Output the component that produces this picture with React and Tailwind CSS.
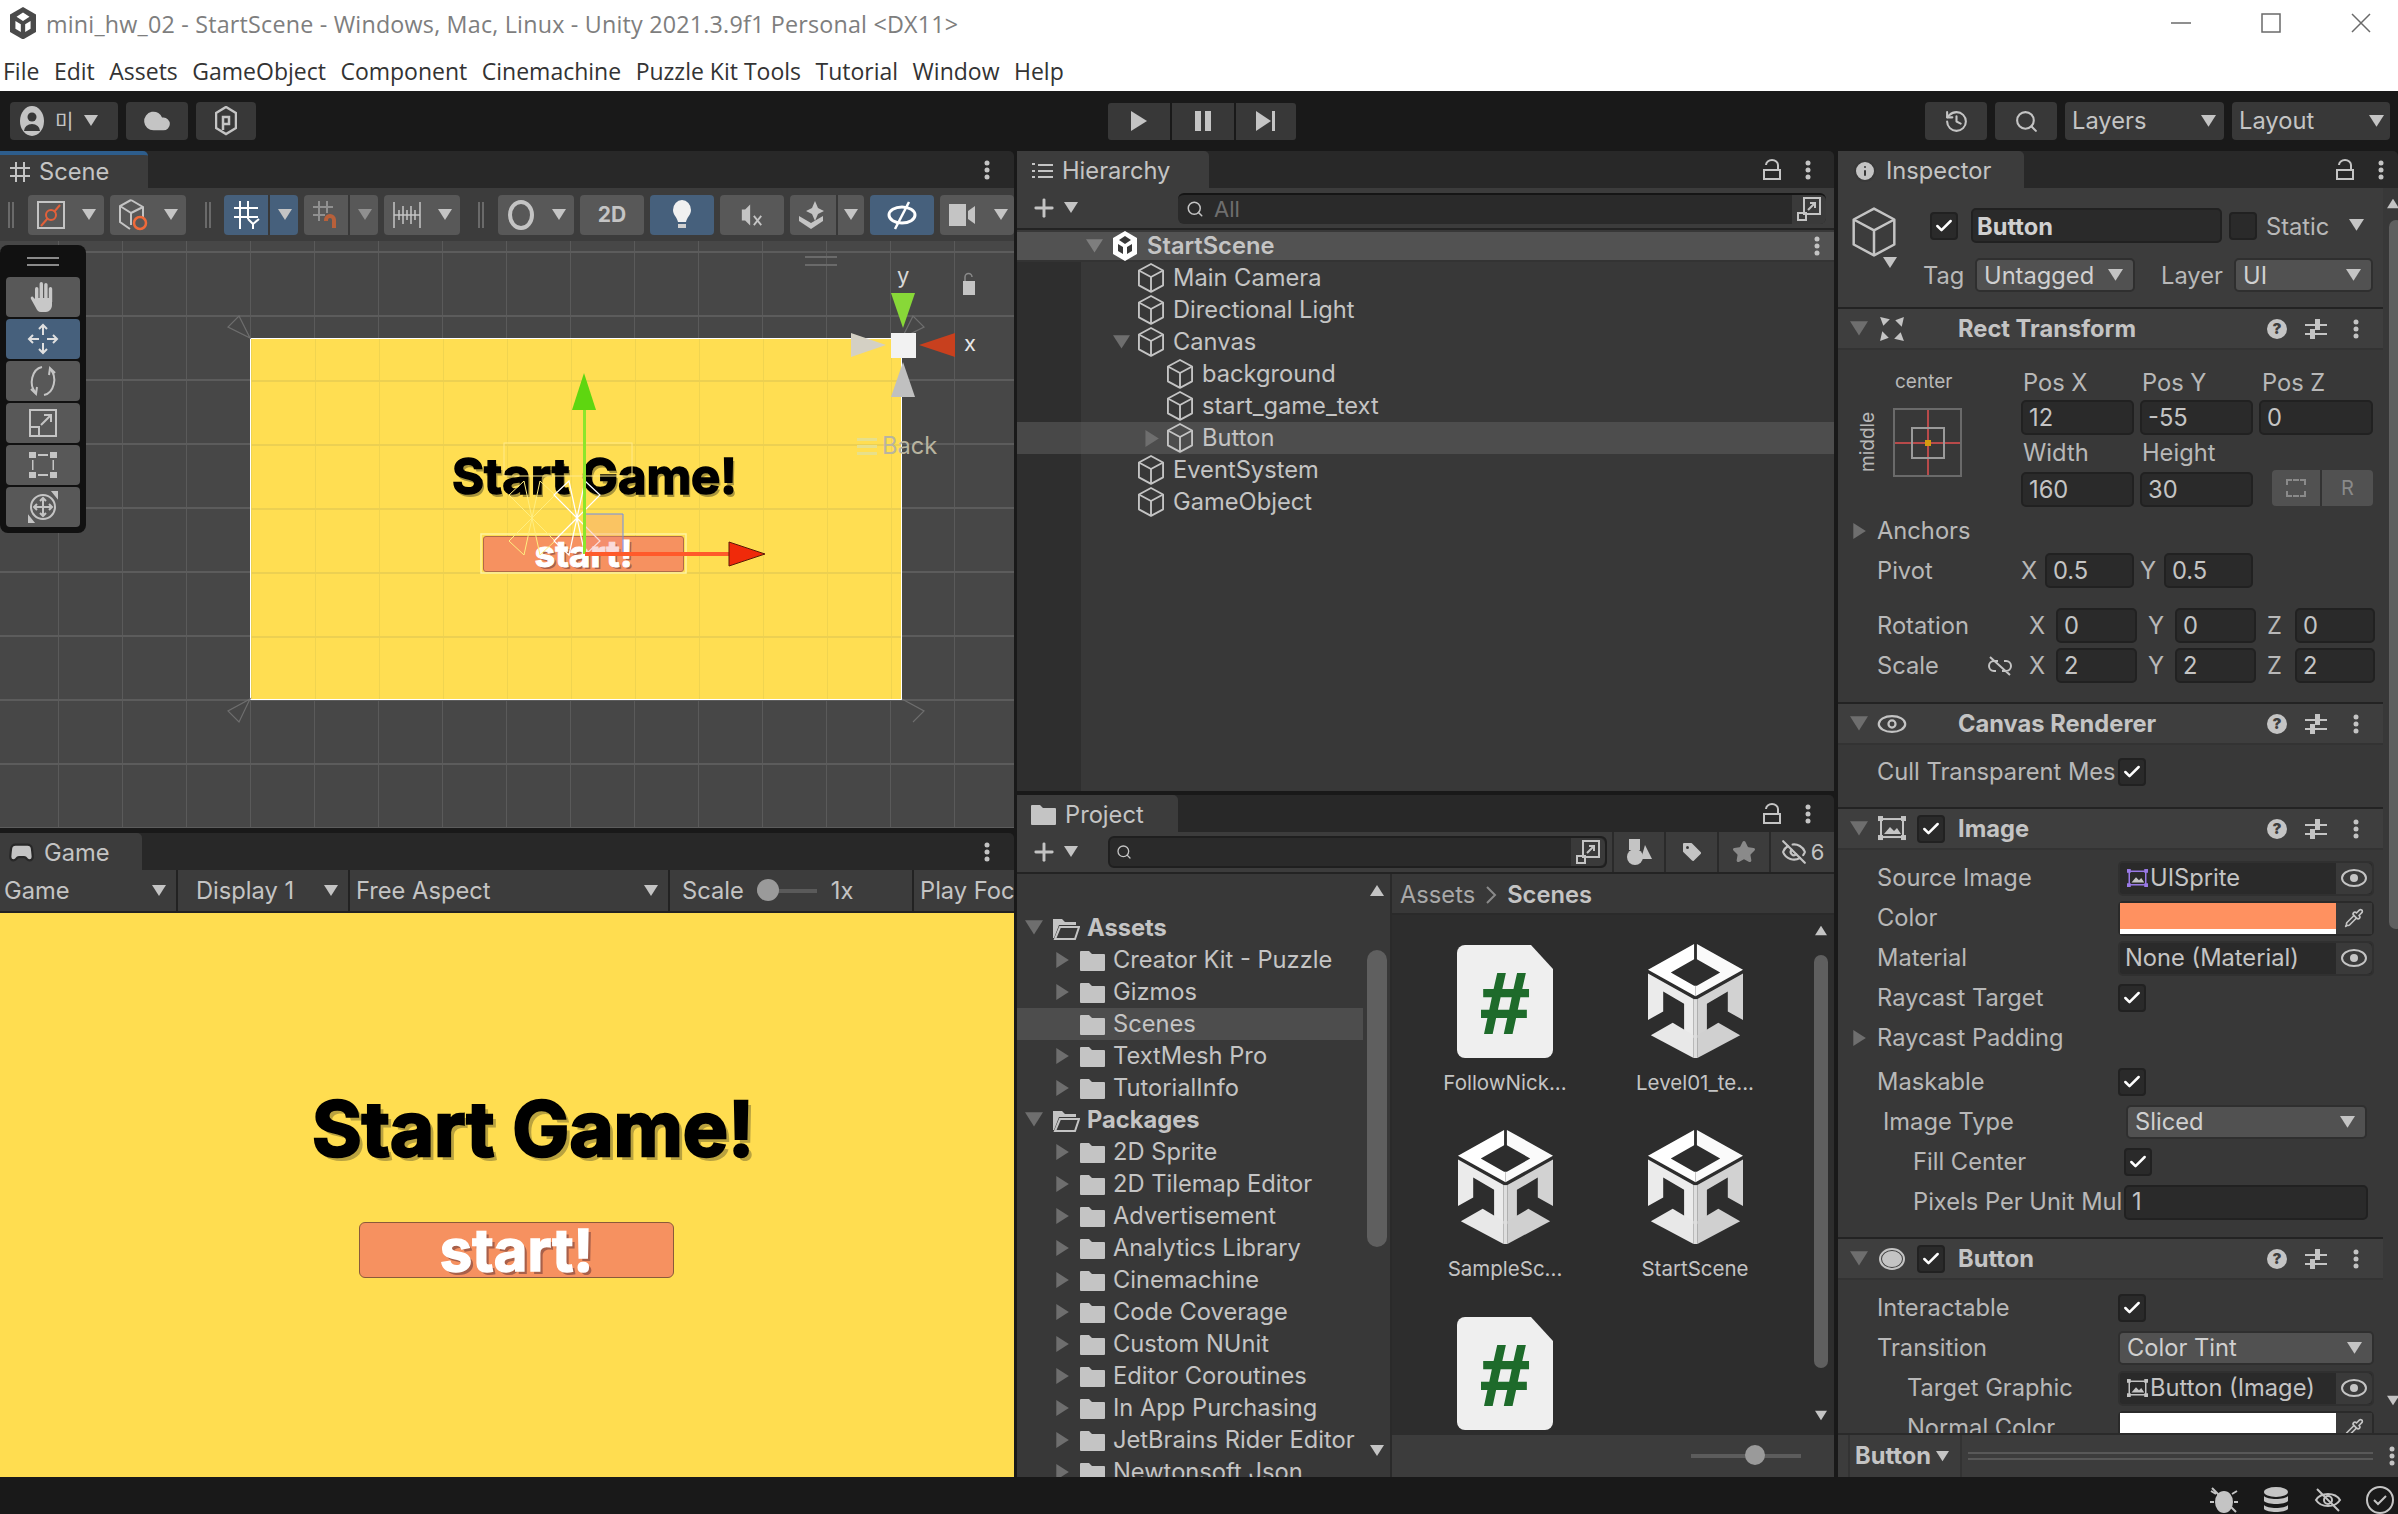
import {
  Check, Search, History, Star, Tag, EyeOff, Info, Gamepad2, Cloud, Plus, Pipette,
} from 'lucide-react';

const txt = 'text-[#c4c4c4]';

function Tri({ dir = 'down', size = 14, color = '#c4c4c4' }) {
  const pts = { down: '0,1 14,1 7,12', right: '2,0 13,7 2,14', up: '0,12 14,12 7,1' }[dir];
  return (
    <svg width={size} height={size} viewBox="0 0 14 14" className="shrink-0">
      <polygon points={pts} fill={color} />
    </svg>
  );
}

function Kebab({ color = '#c4c4c4' }) {
  return (
    <svg width="6" height="20" viewBox="0 0 6 20" className="shrink-0">
      <circle cx="3" cy="3" r="2.5" fill={color} />
      <circle cx="3" cy="10" r="2.5" fill={color} />
      <circle cx="3" cy="17" r="2.5" fill={color} />
    </svg>
  );
}

function LockOpen() {
  return (
    <svg width="18" height="22" viewBox="0 0 18 22" className="shrink-0" fill="none" stroke="#c4c4c4" strokeWidth="2">
      <rect x="1" y="11" width="16" height="9" />
      <path d="M3 6a6 5 0 0 1 12 0v5" />
    </svg>
  );
}

function GoCube({ size = 28, color = '#c4c4c4' }) {
  return (
    <svg width={size} height={size * 1.15} viewBox="0 0 28 32" className="shrink-0" fill="none" stroke={color} strokeWidth="2" strokeLinejoin="round">
      <polygon points="14,1 27,8 27,24 14,31 1,24 1,8" />
      <path d="M1 8l13 7 13-7M14 15v16" />
    </svg>
  );
}

function UnityMini({ width = 24, color = '#fff', bg = 'none' }) {
  return (
    <svg width={width} height={width * 1.25} viewBox="0 0 24 30" className="shrink-0">
      <polygon points="12,0 24,7 24,23 12,30 0,23 0,7" fill={bg === 'none' ? color : bg} />
      <path d="M12 5l6 4-6 4-6-4zM5 13l5 3v7l-5-3zM19 13l-5 3v7l5-3z" fill={bg === 'none' ? '#383838' : color} />
    </svg>
  );
}

function UnityBig() {
  return (
    <svg width="97" height="114" viewBox="0 0 100 120">
      <polygon points="48.5,0 48.5,16 24,30 48.5,44 50,44 50,55 0,27" fill="#ffffff" />
      <polygon points="51.5,0 51.5,16 76,30 51.5,44 50,44 50,55 100,27" fill="#fafafa" />
      <polygon points="0,31 48,58 48,99 38,93 38,63 16,50 16,71 0,80" fill="#ebebeb" />
      <polygon points="100,31 52,58 52,99 62,93 62,63 84,50 84,71 100,80" fill="#d2d2d2" />
      <polygon points="3,96 26,83 48,96 48,120" fill="#e8e8e8" />
      <polygon points="97,96 74,83 52,96 52,120" fill="#d0d0d0" />
      <rect x="48" y="58" width="4" height="62" fill="#dedede" />
    </svg>
  );
}

function ScriptIcon() {
  return (
    <svg width="96" height="113" viewBox="0 0 96 113">
      <path d="M8 0H74L96 24V105a8 8 0 0 1-8 8H8a8 8 0 0 1-8-8V8a8 8 0 0 1 8-8z" fill="#efefef" />
      <text x="48" y="88" textAnchor="middle" fontFamily="Liberation Sans" fontWeight="700" fontSize="88" fill="#1e6b2b" stroke="#1e6b2b" strokeWidth="2">#</text>
    </svg>
  );
}

function Folder({ open }) {
  if (open) {
    return (
      <svg width="28" height="24" viewBox="0 0 28 24" className="shrink-0">
        <path d="M1 3h9l3 3h11v3H7L2 22H1z" fill="#c4c4c4" />
        <path d="M8 11h19l-4 12H3z" fill="none" stroke="#c4c4c4" strokeWidth="2" />
      </svg>
    );
  }
  return (
    <svg width="25" height="21" viewBox="0 0 25 21" className="shrink-0">
      <path d="M0 2a1 1 0 0 1 1-1h8l3 3h12a1 1 0 0 1 1 1v15a1 1 0 0 1-1 1H1a1 1 0 0 1-1-1z" fill="#c4c4c4" />
    </svg>
  );
}

function EyeDot() {
  return (
    <svg width="26" height="20" viewBox="0 0 26 20" fill="none" stroke="#c4c4c4" strokeWidth="2">
      <ellipse cx="13" cy="10" rx="12" ry="8" />
      <circle cx="13" cy="10" r="4" fill="#c4c4c4" stroke="none" />
    </svg>
  );
}

function Grip() {
  return <div className="w-[6px] h-[26px] border-x-2 border-[#6a6a6a] shrink-0" />;
}

function Tab({ width, icon, label, accent, pad = 'pl-[14px]' }) {
  return (
    <div style={{ width }} className={`h-full bg-[#3c3c3c] rounded-tr-[5px] flex items-center gap-[9px] shrink-0 ${pad} ${accent ? 'border-t-4 border-[#2d5d8c]' : 'pt-[2px]'}`}>
      {icon}
      <span className={`text-[23.7px] ${txt}`}>{label}</span>
    </div>
  );
}

function SceneBtn({ width, blue, children, split }) {
  const bg = blue ? 'bg-[#46607c]' : 'bg-[#585858]';
  return (
    <div style={{ width }} className={`h-[40px] ${bg} rounded-[4px] flex items-center justify-center shrink-0 relative`}>
      {children}
      {split && <div style={{ left: split }} className="absolute top-0 bottom-0 w-[2px] bg-[#383838]" />}
    </div>
  );
}

function Toolbar() {
  return (
    <div className="h-[60px] bg-[#191919] flex items-center relative shrink-0">
      <div className="flex items-center gap-[8px] ml-[10px]">
        <div className="w-[108px] h-[38px] bg-[#383838] rounded-[4px] flex items-center pl-[10px] gap-[11px]">
          <svg width="24" height="30" viewBox="0 0 24 30">
            <ellipse cx="12" cy="15" rx="12" ry="15" fill="#c4c4c4" />
            <circle cx="12" cy="11" r="4.5" fill="#383838" />
            <path d="M4 25a8 7 0 0 1 16 0z" fill="#383838" />
          </svg>
          <span className="text-[20px] text-[#c4c4c4] font-['Noto_Sans_CJK_KR',sans-serif]">미</span>
          <Tri size={14} />
        </div>
        <div className="w-[62px] h-[38px] bg-[#383838] rounded-[4px] flex items-center justify-center">
          <Cloud size={28} fill="#c4c4c4" color="#c4c4c4" />
        </div>
        <div className="w-[60px] h-[38px] bg-[#383838] rounded-[4px] flex items-center justify-center">
          <svg width="22" height="30" viewBox="0 0 22 30" fill="none" stroke="#c4c4c4" strokeWidth="2.5">
            <polygon points="11,1 21,7 21,22 11,28 1,22 1,7" />
            <path d="M8 24V11h6v7H8" />
          </svg>
        </div>
      </div>
      <div className="flex items-center gap-[2px] ml-[852px]">
        <div className="w-[62px] h-[37px] bg-[#383838] rounded-l-[3px] flex items-center justify-center">
          <svg width="18" height="20" viewBox="0 0 18 20"><polygon points="1,0 17,10 1,20" fill="#c4c4c4" /></svg>
        </div>
        <div className="w-[62px] h-[37px] bg-[#383838] flex items-center justify-center gap-[4px]">
          <div className="w-[6px] h-[20px] bg-[#c4c4c4]" />
          <div className="w-[6px] h-[20px] bg-[#c4c4c4]" />
        </div>
        <div className="w-[60px] h-[37px] bg-[#383838] rounded-r-[3px] flex items-center justify-center">
          <svg width="22" height="20" viewBox="0 0 22 20"><polygon points="1,0 16,10 1,20" fill="#c4c4c4" /><rect x="17" width="3" height="20" fill="#c4c4c4" /></svg>
        </div>
      </div>
      <div className="flex items-center gap-[8px] ml-auto mr-[8px]">
        <div className="w-[62px] h-[38px] bg-[#383838] rounded-[4px] flex items-center justify-center">
          <History size={25} color="#c4c4c4" />
        </div>
        <div className="w-[62px] h-[38px] bg-[#383838] rounded-[4px] flex items-center justify-center">
          <Search size={25} color="#c4c4c4" />
        </div>
        <div className={`w-[159px] h-[38px] bg-[#383838] rounded-[4px] flex items-center justify-between pl-[7px] pr-[8px] text-[23.7px] ${txt}`}>
          Layers <Tri size={15} />
        </div>
        <div className={`w-[158px] h-[38px] bg-[#383838] rounded-[4px] flex items-center justify-between pl-[7px] pr-[6px] text-[23.7px] ${txt}`}>
          Layout <Tri size={15} />
        </div>
      </div>
    </div>
  );
}

function ToolBtn({ blue, children }) {
  return (
    <div className={`h-[40px] w-[74px] rounded-[4px] flex items-center justify-center ${blue ? 'bg-[#46607c]' : 'bg-[#585858]'}`}>
      {children}
    </div>
  );
}

function Toolbox() {
  return (
    <div className="absolute left-0 top-[4px] w-[86px] h-[288px] bg-[#111111] rounded-[8px] px-[6px] flex flex-col">
      <div className="h-[32px] flex flex-col items-center justify-center gap-[5px]">
        <div className="w-[32px] h-[2px] bg-[#8a8a8a]" />
        <div className="w-[32px] h-[2px] bg-[#8a8a8a]" />
      </div>
      <div className="flex flex-col gap-[2px]">
        <ToolBtn>
          <svg width="28" height="32" viewBox="0 0 28 32" fill="#c8c8c8">
            <rect x="6" y="6" width="3.4" height="16" rx="1.7" />
            <rect x="10.6" y="1" width="3.4" height="20" rx="1.7" />
            <rect x="15.2" y="2" width="3.4" height="19" rx="1.7" />
            <rect x="19.8" y="6" width="3.4" height="16" rx="1.7" />
            <path d="M6 17h17v7c0 4-3 7-6 7h-5c-3 0-4-2-5-4l-5-9c-1-2 1-3 2-2l2 2z" />
          </svg>
        </ToolBtn>
        <ToolBtn blue>
          <svg width="32" height="32" viewBox="0 0 32 32" fill="none" stroke="#e0e0e0" strokeWidth="2">
            <path d="M16 2v10M16 20v10M2 16h10M20 16h10M12 6l4-4 4 4M12 26l4 4 4-4M6 12l-4 4 4 4M26 12l4 4-4 4" />
          </svg>
        </ToolBtn>
        <ToolBtn>
          <svg width="30" height="32" viewBox="0 0 30 32" fill="none" stroke="#c4c4c4" strokeWidth="2">
            <path d="M14 2C4 4 0 20 8 28M16 30c10-2 14-18 6-26" />
            <path d="M3 24l5 5 1-7M27 8l-5-5-1 7" />
          </svg>
        </ToolBtn>
        <ToolBtn>
          <svg width="28" height="28" viewBox="0 0 28 28" fill="none" stroke="#c4c4c4" strokeWidth="2">
            <rect x="1" y="1" width="26" height="26" />
            <path d="M1 18h9v9M12 16l10-10M15 6h7v7" />
          </svg>
        </ToolBtn>
        <ToolBtn>
          <svg width="30" height="28" viewBox="0 0 30 28" fill="#c4c4c4">
            <rect x="1" y="1" width="7" height="6" /><rect x="22" y="1" width="7" height="6" />
            <rect x="1" y="21" width="7" height="6" /><rect x="22" y="21" width="7" height="6" />
            <rect x="10" y="3" width="10" height="2" /><rect x="10" y="23" width="10" height="2" />
            <rect x="4" y="9" width="1.5" height="10" /><rect x="24.5" y="9" width="1.5" height="10" />
          </svg>
        </ToolBtn>
        <ToolBtn>
          <svg width="32" height="32" viewBox="0 0 32 32" fill="none" stroke="#c4c4c4" strokeWidth="2">
            <circle cx="16" cy="16" r="12" />
            <path d="M16 7v18M7 16h18M13 10l3-3 3 3M13 22l3 3 3-3M10 13l-3 3 3 3M22 13l3 3-3 3" />
            <path d="M26 1l4 0 0 5zM2 31l0-5 4 5z" fill="#c4c4c4" />
          </svg>
        </ToolBtn>
      </div>
    </div>
  );
}

function SceneGizmos() {
  return (
    <svg width="1014" height="587" viewBox="0 241 1014 587" className="absolute left-0 top-0 pointer-events-none">
      {/* corner handles */}
      <g fill="none" stroke="#6e6e6e" strokeWidth="1.2">
        <path d="M250 338l-22-11 11-11zM250 699l-22 12 11 11zM902 338l22-11-11-11zM902 699l22 12-11 11" />
      </g>
      {/* text rect + selection frame */}
      <rect x="504" y="443" width="128" height="33" fill="none" stroke="#ffe98a" strokeWidth="1" />
      <rect x="481" y="534" width="205" height="39" fill="none" stroke="#fff3a0" strokeWidth="1.5" />
      {/* light stars */}
      <g fill="none" stroke="#ffee80" strokeWidth="1">
        <path d="M532 518l-23-23 15-14zM532 518l23-23-15-14zM532 518l-23 23 15 14zM532 518l23 23-15 14z" />
      </g>
      <g fill="none" stroke="#ffffff" strokeWidth="1.2">
        <path d="M577 518l-23-23 15-14zM577 518l23-23-15-14zM577 518l-23 23 15 14zM577 518l23 23-15 14z" />
      </g>
      {/* move handle */}
      <rect x="585" y="514" width="38" height="40" fill="#f08888" fillOpacity="0.3" />
      <path d="M585 514h38v40" fill="none" stroke="#6f8fe8" strokeWidth="1" />
      {/* axes */}
      <rect x="583" y="408" width="3" height="146" fill="#8ce62a" />
      <rect x="585" y="552" width="145" height="4" fill="#ff5a2a" />
      <polygon points="584,373 572,410 596,410" fill="#5ed610" />
      <polygon points="729,542 765,554 729,566" fill="#f02a0a" stroke="#5a1808" strokeWidth="1" />
      {/* scene orientation gizmo */}
      <polygon points="891,293 915,293 903,328" fill="#88d838" />
      <polygon points="955,333 955,357 919,345" fill="#c8401e" />
      <polygon points="851,333 851,357 886,345" fill="#d4d0c4" />
      <polygon points="903,362 891,397 915,397" fill="#c0c0c0" />
      <rect x="891" y="333" width="25" height="25" fill="#f2f2f2" />
      <rect x="963" y="281" width="12" height="14" fill="#c4c4c4" />
      <path d="M965 281v-4a3 3 0 0 1 7 0" fill="none" stroke="#8a8a8a" strokeWidth="1.5" />
      {/* back label handle */}
      <g fill="#e8e08a">
        <rect x="857" y="438" width="20" height="3" /><rect x="857" y="445" width="20" height="3" /><rect x="857" y="452" width="20" height="3" />
      </g>
      <g fill="#6a6a6a"><rect x="805" y="256" width="32" height="2" /><rect x="805" y="264" width="32" height="2" /></g>
    </svg>
  );
}

function SceneView() {
  return (
    <div className="flex-1 relative overflow-hidden bg-[#474747] bg-[linear-gradient(#5c5c5c_2px,transparent_2px),linear-gradient(90deg,#5a5a5a_1px,transparent_1px)] bg-[length:64px_64px] bg-[position:58px_10px]">
      <div className="absolute left-[250px] top-[97px] w-[652px] h-[362px] bg-[#ffde52] border border-white bg-[linear-gradient(#ecd052_2px,transparent_2px),linear-gradient(90deg,#f0d450_1px,transparent_1px)] bg-[length:64px_64px] bg-[position:0px_41px]" />
      <span className="absolute left-[452px] top-[206px] text-[49px] leading-[60px] font-bold text-black whitespace-nowrap [-webkit-text-stroke:1.5px_black] [text-shadow:2px_3px_0_#a8953c]">Start Game!</span>
      <div className="absolute left-[483px] top-[295px] w-[201px] h-[36px] rounded-[3px] bg-[#f69160] border border-[#b06a48] flex items-center justify-center">
        <span className="text-[37px] leading-[36px] font-bold text-white [-webkit-text-stroke:1px_white] [text-shadow:2px_2px_0_#a8604a]">start!</span>
      </div>
      <SceneGizmos />
      <span className="absolute left-[897px] top-[18px] text-[22px] text-[#d8d8d8]">y</span>
      <span className="absolute left-[964px] top-[86px] text-[22px] text-[#e8e8e8]">x</span>
      <span className="absolute left-[882px] top-[187px] text-[23.7px] text-[#b8b4a0]">Back</span>
      <Toolbox />
    </div>
  );
}

function ScenePanel() {
  return (
    <div className="h-[677px] flex flex-col bg-[#282828] rounded-tr-[5px]">
      <div className="h-[37px] flex items-center justify-between shrink-0 pr-[24px]">
        <Tab
          width={148}
          accent
          pad="pl-[10px]"
          label="Scene"
          icon={
            <svg width="20" height="20" viewBox="0 0 20 20" stroke="#c4c4c4" strokeWidth="2"><path d="M6 0v20M14 0v20M0 6h20M0 14h20" /></svg>
          }
        />
        <Kebab />
      </div>
      <div className="h-[53px] bg-[#3c3c3c] flex items-center shrink-0 overflow-hidden">
        <div className="ml-[8px] mr-[14px]"><Grip /></div>
        <SceneBtn width={76}>
          <svg width="28" height="28" viewBox="0 0 28 28" fill="none" className="mr-[30px]">
            <rect x="1" y="1" width="26" height="26" stroke="#c4c4c4" strokeWidth="2" />
            <circle cx="14" cy="14" r="5" stroke="#e2603a" strokeWidth="2" />
            <path d="M4 25l7-8M17 11l6-7" stroke="#e2603a" strokeWidth="2" />
          </svg>
          <span className="absolute right-[8px]"><Tri /></span>
        </SceneBtn>
        <div className="w-[6px]" />
        <SceneBtn width={76}>
          <svg width="30" height="32" viewBox="0 0 30 32" fill="none" className="mr-[30px]">
            <path d="M13 1l12 7v10M13 1L2 7v16l10 7M2 7l11 7v12M13 14l12-6" stroke="#c4c4c4" strokeWidth="2" />
            <circle cx="22" cy="24" r="6" stroke="#f06a3a" strokeWidth="2.5" />
          </svg>
          <span className="absolute right-[8px]"><Tri /></span>
        </SceneBtn>
        <div className="ml-[19px] mr-[13px]"><Grip /></div>
        <SceneBtn width={74} blue split={44}>
          <svg width="28" height="30" viewBox="0 0 28 30" stroke="#ffffff" strokeWidth="2" fill="none" className="mr-[28px]">
            <path d="M7 1v28M15 1v18M1 8h24M1 17h24" /><path d="M15 19l5 5v5M26 19l-6 5" />
          </svg>
          <span className="absolute right-[6px]"><Tri /></span>
        </SceneBtn>
        <div className="w-[6px]" />
        <SceneBtn width={74} split={44}>
          <svg width="30" height="30" viewBox="0 0 30 30" fill="none" className="mr-[28px]">
            <path d="M7 1v20M15 1v12M1 7h20M1 15h12" stroke="#909090" strokeWidth="2" />
            <path d="M12 20a6 6 0 0 1 12 0v8h-4v-8a2 2 0 0 0-4 0v1h-4z" fill="#b8603a" />
          </svg>
          <span className="absolute right-[6px]"><Tri color="#909090" /></span>
        </SceneBtn>
        <div className="w-[6px]" />
        <SceneBtn width={76}>
          <svg width="28" height="30" viewBox="0 0 28 30" stroke="#c4c4c4" strokeWidth="1.5" className="mr-[30px]">
            <path d="M1 2v26M27 2v26M6 10v10M10 6v18M14 10v10M18 6v18M22 10v10M1 15h26" />
          </svg>
          <span className="absolute right-[8px]"><Tri /></span>
        </SceneBtn>
        <div className="ml-[18px] mr-[14px]"><Grip /></div>
        <SceneBtn width={76}>
          <svg width="28" height="30" viewBox="0 0 28 30" fill="none" className="mr-[30px]">
            <ellipse cx="14" cy="15" rx="11" ry="13" stroke="#c4c4c4" strokeWidth="4" />
          </svg>
          <span className="absolute right-[8px]"><Tri /></span>
        </SceneBtn>
        <div className="w-[6px]" />
        <SceneBtn width={64}><span className="text-[21px] font-bold text-[#c4c4c4]">2D</span></SceneBtn>
        <div className="w-[6px]" />
        <SceneBtn width={64} blue>
          <svg width="20" height="30" viewBox="0 0 20 30">
            <path d="M10 0a9 10 0 0 1 9 10c0 5-4 7-5 12H6c-1-5-5-7-5-12a9 10 0 0 1 9-10z" fill="#f0f0f0" />
            <rect x="6" y="24" width="8" height="4" fill="#d0d0d0" />
          </svg>
        </SceneBtn>
        <div className="w-[6px]" />
        <SceneBtn width={64}>
          <svg width="24" height="24" viewBox="0 0 26 26" stroke="#c4c4c4" strokeWidth="2" fill="#c4c4c4">
            <path d="M3 8h3l4-4v18l-4-4H3z" /><path d="M15 14l8 10M23 14l-8 10" fill="none" />
          </svg>
        </SceneBtn>
        <div className="w-[6px]" />
        <SceneBtn width={74} split={46}>
          <svg width="28" height="30" viewBox="0 0 28 30" fill="#c4c4c4" className="mr-[32px]">
            <path d="M18 1l3 7 6 3-6 3-3 7-3-7-6-3 6-3z" />
            <path d="M2 16l12 7 12-7v5l-12 8-12-8z" />
          </svg>
          <span className="absolute right-[6px]"><Tri /></span>
        </SceneBtn>
        <div className="w-[6px]" />
        <SceneBtn width={64} blue>
          <svg width="30" height="30" viewBox="0 0 30 30" fill="none" stroke="#ffffff" strokeWidth="3">
            <ellipse cx="15" cy="15" rx="13" ry="8" />
            <path d="M8 29L22 2" strokeWidth="2.5" />
          </svg>
        </SceneBtn>
        <div className="w-[6px]" />
        <SceneBtn width={74}>
          <svg width="26" height="22" viewBox="0 0 26 22" fill="#c4c4c4" className="mr-[30px]">
            <rect width="17" height="22" /><polygon points="19,7 26,2 26,20 19,15" />
          </svg>
          <span className="absolute right-[6px]"><Tri /></span>
        </SceneBtn>
      </div>
      <SceneView />
    </div>
  );
}

function GameDrop({ width, children, arrow = true }) {
  return (
    <div style={{ width }} className={`h-full bg-[#3c3c3c] flex items-center justify-between shrink-0 text-[23.7px] ${txt} pr-[10px] overflow-hidden`}>
      {children}
      {arrow && <Tri />}
    </div>
  );
}

function GamePanel() {
  return (
    <div className="flex-1 flex flex-col bg-[#282828] rounded-tr-[5px]">
      <div className="h-[37px] flex items-center justify-between shrink-0 pr-[24px]">
        <Tab width={142} pad="pl-[8px]" label="Game" icon={<Gamepad2 size={27} color="#282828" fill="#c4c4c4" />} />
        <Kebab />
      </div>
      <div className="h-[43px] flex gap-[2px] shrink-0 bg-[#222222] border-b-2 border-[#222222]">
        <GameDrop width={176}><span className="pl-[4px]">Game</span></GameDrop>
        <GameDrop width={170}><span className="pl-[18px]">Display 1</span></GameDrop>
        <GameDrop width={318}><span className="pl-[6px]">Free Aspect</span></GameDrop>
        <div className={`w-[242px] bg-[#3c3c3c] flex items-center pl-[12px] text-[23.7px] ${txt} shrink-0`}>
          Scale
          <div className="relative ml-[13px] w-[60px] h-[4px] bg-[#5a5a5a]">
            <div className="absolute left-0 top-[-10px] w-[22px] h-[22px] rounded-full bg-[#9a9a9a]" />
          </div>
          <span className="ml-[14px]">1x</span>
        </div>
        <div className={`flex-1 bg-[#3c3c3c] flex items-center pl-[6px] text-[23.7px] ${txt} overflow-hidden whitespace-nowrap`}>Play Focused</div>
      </div>
      <div className="flex-1 bg-[#ffdd50] flex flex-col pt-[180px]">
        <div className="ml-[312px] h-[70px] flex items-center">
          <span className="text-[76px] leading-[70px] font-bold text-black whitespace-nowrap [-webkit-text-stroke:2.5px_black] [text-shadow:4px_4px_0_#b9a23f]">Start Game!</span>
        </div>
        <div className="ml-[359px] mt-[59px] w-[315px] h-[56px] rounded-[6px] bg-[#f69160] border border-[#8a5a3a] flex items-center justify-center">
          <span className="text-[58px] leading-[52px] font-bold text-white [-webkit-text-stroke:1.5px_white] [text-shadow:3px_3px_0_#a8604a]">start!</span>
        </div>
      </div>
    </div>
  );
}

function HierRow({ depth, tri, label, selected }) {
  const gutter = selected ? 'bg-[#484848]' : 'bg-[#2e2e2e]';
  const body = selected ? 'bg-[#4d4d4d]' : '';
  const pad = depth === 1 ? 'pl-[57px]' : 'pl-[86px]';
  return (
    <div className="h-[32px] flex shrink-0">
      <div className={`w-[64px] ${gutter} shrink-0`} />
      <div className={`flex-1 flex items-center gap-[9px] relative ${pad} ${body}`}>
        {tri && <span className={`absolute ${depth === 1 ? 'left-[32px]' : 'left-[62px]'}`}><Tri dir={tri} size={17} color="#6e6e6e" /></span>}
        <GoCube size={26} />
        <span className={`text-[23.7px] ${txt}`}>{label}</span>
      </div>
    </div>
  );
}

function HierarchyPanel() {
  return (
    <div className="h-[640px] flex flex-col bg-[#282828] rounded-tr-[5px] shrink-0">
      <div className="h-[37px] flex items-center shrink-0 pr-[23px]">
        <Tab
          width={192}
          label="Hierarchy"
          icon={
            <svg width="22" height="20" viewBox="0 0 22 20" stroke="#c4c4c4" strokeWidth="2"><path d="M7 4h15M7 10h15M7 16h15M1 3h3M1 10h3M1 16h3" /></svg>
          }
        />
        <div className="ml-auto flex items-center gap-[24px]"><LockOpen /><Kebab /></div>
      </div>
      <div className="h-[42px] bg-[#3c3c3c] flex items-center shrink-0 border-b-2 border-[#232323]">
        <div className="w-[161px] pl-[13px] flex items-center gap-[6px]">
          <Plus size={28} color="#c4c4c4" strokeWidth={2.5} /><Tri />
        </div>
        <div className="w-[648px] h-[31px] rounded-[6px] bg-[#2a2a2a] border-t-2 border-[#151515] flex items-center pl-[8px] gap-[10px] relative">
          <Search size={18} color="#c4c4c4" />
          <span className="text-[22px] text-[#6e6e6e]">All</span>
          <div className="absolute right-0 top-0 bottom-0 w-[34px] bg-[#3a3a3a] rounded-r-[6px] flex items-center justify-center">
            <svg width="24" height="24" viewBox="0 0 24 24" fill="none" stroke="#c4c4c4" strokeWidth="2"><rect x="7" y="1" width="16" height="16" /><rect x="1" y="16" width="8" height="7" /><path d="M11 13l7-7M13 6h5v5" /></svg>
          </div>
        </div>
      </div>
      <div className="flex-1 flex flex-col bg-[#383838]">
        <div className="h-[30px] bg-[#525252] flex items-center pl-[69px] pr-[14px] mt-[2px] shrink-0 border-b-2 border-[#333333]">
          <Tri size={17} color="#7e7e7e" />
          <span className="ml-[10px]"><UnityMini width={24} /></span>
          <span className={`ml-[10px] text-[23.7px] font-semibold ${txt}`}>StartScene</span>
          <span className="ml-auto"><Kebab /></span>
        </div>
        <HierRow depth={1} label="Main Camera" />
        <HierRow depth={1} label="Directional Light" />
        <HierRow depth={1} tri="down" label="Canvas" />
        <HierRow depth={2} label="background" />
        <HierRow depth={2} label="start_game_text" />
        <HierRow depth={2} tri="right" label="Button" selected />
        <HierRow depth={1} label="EventSystem" />
        <HierRow depth={1} label="GameObject" />
        <div className="flex-1 w-[64px] bg-[#2e2e2e]" />
      </div>
    </div>
  );
}

function TreeRoot({ label }) {
  return (
    <div className="h-[32px] flex items-center pl-[8px] shrink-0">
      <Tri size={18} color="#6e6e6e" />
      <span className="ml-[9px]"><Folder open /></span>
      <span className={`ml-[7px] text-[23.7px] font-bold ${txt}`}>{label}</span>
    </div>
  );
}

function TreeItem({ label, selected, leaf }) {
  return (
    <div className={`h-[32px] flex items-center pl-[37px] shrink-0 ${selected ? 'bg-[#4d4d4d]' : ''}`}>
      <span className="w-[26px] shrink-0">{!leaf && <Tri dir="right" size={16} color="#6e6e6e" />}</span>
      <Folder />
      <span className={`ml-[8px] text-[23.7px] whitespace-nowrap ${txt}`}>{label}</span>
    </div>
  );
}

function Asset({ name, icon }) {
  return (
    <div className="flex flex-col items-center h-[186px] w-[190px]">
      <div className="h-[114px] flex items-center justify-center">{icon}</div>
      <span className={`mt-[10px] text-[20.5px] ${txt} whitespace-nowrap`}>{name}</span>
    </div>
  );
}

function ProjectPanel() {
  return (
    <div className="flex-1 flex flex-col bg-[#282828] rounded-tr-[5px] overflow-hidden">
      <div className="h-[37px] flex items-center shrink-0 pr-[23px]">
        <Tab width={161} pad="pl-[14px]" label="Project" icon={<Folder />} />
        <div className="ml-auto flex items-center gap-[24px]"><LockOpen /><Kebab /></div>
      </div>
      <div className="h-[42px] bg-[#3c3c3c] flex items-center shrink-0 border-b-2 border-[#232323]">
        <div className="w-[91px] pl-[13px] flex items-center gap-[6px]">
          <Plus size={28} color="#c4c4c4" strokeWidth={2.5} /><Tri />
        </div>
        <div className="w-[499px] h-[32px] rounded-[6px] bg-[#2a2a2a] border-2 border-[#1f1f1f] flex items-center pl-[6px] relative">
          <Search size={16} color="#c4c4c4" />
          <div className="absolute right-0 top-0 bottom-0 w-[34px] bg-[#3a3a3a] rounded-r-[6px] flex items-center justify-center">
            <svg width="24" height="24" viewBox="0 0 24 24" fill="none" stroke="#c4c4c4" strokeWidth="2"><rect x="7" y="1" width="16" height="16" /><rect x="1" y="16" width="8" height="7" /><path d="M11 13l7-7M13 6h5v5" /></svg>
          </div>
        </div>
        <div className="ml-[5px] h-full w-[52px] flex items-center justify-center border-l-2 border-[#2a2a2a]">
          <svg width="26" height="26" viewBox="0 0 26 26" fill="#c4c4c4"><circle cx="9" cy="18" r="8" /><rect x="3" y="0" width="11" height="11" /><polygon points="19,6 26,20 15,20" /></svg>
        </div>
        <div className="h-full w-[53px] flex items-center justify-center border-l-2 border-[#2a2a2a]">
          <Tag size={24} color="#3c3c3c" fill="#c4c4c4" />
        </div>
        <div className="h-full w-[52px] flex items-center justify-center border-l-2 border-[#2a2a2a]">
          <Star size={24} color="#8a8a8a" fill="#8a8a8a" />
        </div>
        <div className="h-full flex-1 flex items-center justify-center gap-[4px] border-l-2 border-[#2a2a2a]">
          <EyeOff size={26} color="#c4c4c4" />
          <span className={`text-[22px] ${txt}`}>6</span>
        </div>
      </div>
      <div className="flex-1 flex min-h-0">
        <div className="w-[375px] bg-[#383838] flex overflow-hidden shrink-0 border-r-2 border-[#2a2a2a]">
          <div className="flex-1 flex flex-col pt-[38px] overflow-hidden">
            <TreeRoot label="Assets" />
            <TreeItem label="Creator Kit - Puzzle" />
            <TreeItem label="Gizmos" />
            <TreeItem label="Scenes" selected leaf />
            <TreeItem label="TextMesh Pro" />
            <TreeItem label="TutorialInfo" />
            <TreeRoot label="Packages" />
            <TreeItem label="2D Sprite" />
            <TreeItem label="2D Tilemap Editor" />
            <TreeItem label="Advertisement" />
            <TreeItem label="Analytics Library" />
            <TreeItem label="Cinemachine" />
            <TreeItem label="Code Coverage" />
            <TreeItem label="Custom NUnit" />
            <TreeItem label="Editor Coroutines" />
            <TreeItem label="In App Purchasing" />
            <TreeItem label="JetBrains Rider Editor" />
            <TreeItem label="Newtonsoft Json" />
          </div>
          <div className="w-[27px] flex flex-col items-center pt-[10px] shrink-0">
            <Tri dir="up" size={14} />
            <div className="mt-[52px] w-[20px] h-[297px] rounded-full bg-[#5f5f5f]" />
            <div className="mt-[197px]"><Tri size={14} /></div>
          </div>
        </div>
        <div className="flex-1 flex flex-col bg-[#2d2d2d] min-w-0">
          <div className="h-[41px] bg-[#383838] flex items-center pl-[8px] pt-[2px] gap-[10px] shrink-0 border-b-2 border-[#2a2a2a]">
            <span className="text-[23.7px] text-[#a8a8a8]">Assets</span>
            <svg width="12" height="18" viewBox="0 0 12 18" fill="none" stroke="#8a8a8a" strokeWidth="2"><path d="M2 1l8 8-8 8" /></svg>
            <span className={`text-[23.7px] font-semibold ${txt}`}>Scenes</span>
          </div>
          <div className="flex-1 flex min-h-0 overflow-hidden">
            <div className="flex-1 grid grid-cols-[190px_190px] content-start pt-[29px] pl-[18px] overflow-hidden">
              <Asset name="FollowNick..." icon={<ScriptIcon />} />
              <Asset name="Level01_te..." icon={<UnityBig />} />
              <Asset name="SampleSc..." icon={<UnityBig />} />
              <Asset name="StartScene" icon={<UnityBig />} />
              <Asset name="" icon={<ScriptIcon />} />
            </div>
            <div className="w-[26px] flex flex-col items-center pt-[10px] shrink-0">
              <Tri dir="up" size={12} />
              <div className="mt-[18px] w-[14px] h-[413px] rounded-full bg-[#5f5f5f]" />
              <div className="mt-[42px]"><Tri size={12} /></div>
            </div>
          </div>
          <div className="h-[42px] bg-[#3c3c3c] shrink-0 flex items-center justify-end pr-[33px]">
            <div className="w-[110px] h-[4px] bg-[#5c5c5c] relative">
              <div className="absolute left-[54px] top-[-9px] w-[20px] h-[20px] rounded-full bg-[#9a9a9a]" />
            </div>
          </div>
        </div>
      </div>
    </div>
  );
}

function CheckBox({ on = true }) {
  return (
    <div className="w-[28px] h-[28px] rounded-[4px] bg-[#2a2a2a] border-2 border-[#212121] flex items-center justify-center shrink-0">
      {on && <Check size={20} color="#ffffff" strokeWidth={3} />}
    </div>
  );
}

function Field({ width, children, pad = 'pl-[6px]' }) {
  return (
    <div style={{ width }} className={`h-[35px] rounded-[5px] bg-[#2a2a2a] border-2 border-[#212121] flex items-center shrink-0 text-[23.7px] ${txt} ${pad}`}>
      {children}
    </div>
  );
}

function DropDown({ width, children, bg = 'bg-[#515151]' }) {
  return (
    <div style={{ width }} className={`h-[34px] rounded-[5px] ${bg} border-2 border-[#2f2f2f] flex items-center justify-between pl-[7px] pr-[10px] shrink-0 text-[23.7px] text-[#d0d0d0]`}>
      {children}
      <Tri size={15} />
    </div>
  );
}

function HelpIcons() {
  return (
    <div className="flex items-center gap-[18px] pr-[16px] ml-auto">
      <div className="w-[20px] h-[20px] rounded-full bg-[#c4c4c4] flex items-center justify-center text-[15px] font-black text-[#3e3e3e] leading-none">?</div>
      <svg width="22" height="20" viewBox="0 0 22 20" stroke="#c4c4c4" strokeWidth="2"><path d="M0 6h22M0 15h22" /><rect x="11" y="1" width="3" height="9" fill="#c4c4c4" /><rect x="6" y="11" width="3" height="8" fill="#c4c4c4" /></svg>
      <span className="w-[22px] flex justify-center"><Kebab /></span>
    </div>
  );
}

function SectionHead({ icon, check, title }) {
  return (
    <div className="h-[43px] bg-[#3e3e3e] border-t-2 border-b-2 border-t-[#232323] border-b-[#333333] flex items-center shrink-0">
      <div className="w-[120px] shrink-0 flex items-center pl-[12px]">
        <Tri size={18} color="#6e6e6e" />
        <span className="w-[30px] ml-[9px] flex justify-center">{icon}</span>
        {check && <span className="ml-[10px]"><CheckBox /></span>}
      </div>
      <span className={`text-[23.7px] font-bold ${txt} pt-[1px]`}>{title}</span>
      <HelpIcons />
    </div>
  );
}

function PropRow({ label, children, h = 'h-[40px]', pad = 'pl-[39px]', labelW = 'w-[241px]', tri }) {
  return (
    <div className={`${h} flex items-center relative shrink-0 ${pad}`}>
      {tri && <span className="absolute left-[13px]"><Tri dir="right" size={16} color="#6e6e6e" /></span>}
      <span className={`${labelW} shrink-0 overflow-hidden whitespace-nowrap text-[23.7px] text-[#b8b8b8]`}>{label}</span>
      {children}
    </div>
  );
}

function ObjField({ icon, label, eye = true }) {
  return (
    <div className={`w-[256px] h-[35px] rounded-[5px] bg-[#2a2a2a] border-2 border-[#303030] flex items-center shrink-0 text-[23.7px] ${txt} relative ${icon ? 'pl-[7px]' : 'pl-[3px]'}`}>
      {icon}
      <span className="ml-[2px] whitespace-nowrap">{label}</span>
      {eye && (
        <div className="absolute right-0 top-0 bottom-0 w-[36px] bg-[#3a3a3a] rounded-r-[5px] flex items-center justify-center">
          <EyeDot />
        </div>
      )}
    </div>
  );
}

function ColorField({ color, bar = true }) {
  return (
    <div className="w-[256px] h-[35px] bg-[#2a2a2a] rounded-[5px] flex shrink-0 overflow-hidden p-[2px]">
      <div className="w-[216px] flex flex-col">
        <div className={`flex-1 ${color}`} />
        {bar && <div className="h-[5px] bg-white" />}
      </div>
      <div className="flex-1 flex items-center justify-center bg-[#3a3a3a]"><Pipette size={20} color="#c4c4c4" /></div>
    </div>
  );
}

function ImgIcon({ stroke = '#c4c4c4', size = 28 }) {
  return (
    <svg width={size} height={size * 0.86} viewBox="0 0 28 24" className="shrink-0">
      <rect x="3" y="3" width="22" height="18" fill="none" stroke={stroke} strokeWidth="2" />
      <path d="M6 18l6-7 4 4 3-3 4 6z" fill="#c4c4c4" />
      <g fill={stroke}><rect width="5" height="5" /><rect x="23" width="5" height="5" /><rect y="19" width="5" height="5" /><rect x="23" y="19" width="5" height="5" /></g>
    </svg>
  );
}

function TransformField({ axis, value, labelW, width }) {
  return (
    <div className="flex items-center">
      <span style={{ width: labelW }} className="text-[23.7px] text-[#b8b8b8] shrink-0">{axis}</span>
      <Field width={width}>{value}</Field>
    </div>
  );
}

function InspectorPanel() {
  return (
    <div className="flex-1 flex flex-col bg-[#282828] rounded-tr-[5px] overflow-hidden">
      <div className="h-[37px] flex items-center shrink-0 pr-[14px]">
        <Tab width={186} pad="pl-[15px]" label="Inspector" icon={<Info size={24} color="#383838" fill="#c4c4c4" />} />
        <div className="ml-auto flex items-center gap-[24px]"><LockOpen /><Kebab /></div>
      </div>
      <div className="h-[1245px] flex shrink-0 overflow-hidden bg-[#383838]">
        <div className="w-[545px] shrink-0 flex flex-col overflow-hidden">
          {/* object header */}
          <div className="h-[119px] bg-[#3c3c3c] relative shrink-0">
            <div className="absolute left-[14px] top-[19px]">
              <svg width="44" height="50" viewBox="0 0 28 32" fill="none" stroke="#c4c4c4" strokeWidth="1.6" strokeLinejoin="round">
                <polygon points="14,1 27,8 27,24 14,31 1,24 1,8" /><path d="M1 8l13 7 13-7M14 15v16" />
              </svg>
            </div>
            <span className="absolute left-[45px] top-[68px]"><Tri size={14} /></span>
            <div className="pl-[92px] pt-[19px] flex items-center">
              <CheckBox />
              <div className="ml-[13px] w-[251px] h-[35px] rounded-[5px] bg-[#2a2a2a] border-2 border-[#212121] flex items-center pl-[4px] pt-[2px] text-[23.7px] font-bold text-[#d0d0d0]">Button</div>
              <div className="ml-[7px]"><CheckBox on={false} /></div>
              <span className="ml-[9px] pt-[2px] text-[23.7px] text-[#b8b8b8]">Static</span>
              <span className="ml-[20px]"><Tri size={15} /></span>
            </div>
            <div className="pl-[85px] mt-[13px] flex items-center">
              <span className="w-[52px] text-[23.7px] text-[#b8b8b8]">Tag</span>
              <DropDown width={160}>Untagged</DropDown>
              <span className="ml-[26px] w-[73px] text-[23.7px] text-[#b8b8b8]">Layer</span>
              <DropDown width={139}>UI</DropDown>
            </div>
          </div>

          <SectionHead
            title="Rect Transform"
            icon={
              <svg width="28" height="26" viewBox="0 0 24 24" fill="#c4c4c4"><path d="M1 1l9 2-6 6zM23 1l-2 9-6-6zM1 23l2-9 6 6zM23 23l-9-2 6-6z" /></svg>
            }
          />
          <div className="flex pt-[19px] shrink-0">
            <div className="w-[183px] shrink-0 relative h-[138px]">
              <span className="absolute left-[57px] top-[-1px] text-[19px] text-[#b8b8b8]">center</span>
              <span className="absolute left-[16px] top-[38px] h-[70px] text-[19px] text-[#b8b8b8] flex items-center justify-center [writing-mode:vertical-rl] rotate-180">middle</span>
              <div className="absolute left-[55px] top-[39px] w-[69px] h-[69px] border-2 border-[#6a6a6a] flex items-center justify-center">
                <div className="absolute left-0 right-0 top-[32px] h-[2px] bg-[#b84a4a]" />
                <div className="absolute top-0 bottom-0 left-[32px] w-[2px] bg-[#b84a4a]" />
                <div className="w-[34px] h-[32px] border-2 border-[#9a9a9a] relative flex items-center justify-center">
                  <div className="w-[6px] h-[6px] bg-[#d49a10]" />
                </div>
              </div>
            </div>
            <div className="flex flex-col">
              <div className="h-[31px] flex text-[23.7px] text-[#b8b8b8] items-center pl-[2px] pb-[4px]">
                <span className="w-[119px]">Pos X</span><span className="w-[120px]">Pos Y</span><span>Pos Z</span>
              </div>
              <div className="flex gap-[6px]">
                <Field width={113}>12</Field><Field width={113}>-55</Field><Field width={114}>0</Field>
              </div>
              <div className="h-[37px] flex text-[23.7px] text-[#b8b8b8] items-center pl-[2px] pb-[2px]">
                <span className="w-[119px]">Width</span><span>Height</span>
              </div>
              <div className="flex gap-[6px]">
                <Field width={113}>160</Field><Field width={113}>30</Field>
                <div className="ml-[13px] mt-[-2px] w-[101px] h-[36px] rounded-[4px] bg-[#515151] flex items-center">
                  <div className="w-[48px] flex justify-center"><div className="w-[20px] h-[18px] border-2 border-dashed border-[#8a8a8a]" /></div>
                  <div className="w-[2px] h-full bg-[#333333]" />
                  <span className="flex-1 text-center text-[20px] text-[#8a8a8a]">R</span>
                </div>
              </div>
            </div>
          </div>
          <div className="mt-[4px]">
            <PropRow label="Anchors" tri />
            <div className="h-[40px] flex items-center pl-[39px] shrink-0">
              <span className="w-[144px] text-[23.7px] text-[#b8b8b8]">Pivot</span>
              <div className="flex gap-[8px]">
                <TransformField axis="X" value="0.5" labelW={24} width={89} />
                <div className="ml-[-2px]"><TransformField axis="Y" value="0.5" labelW={24} width={89} /></div>
              </div>
            </div>
          </div>
          <div className="mt-[15px]">
            {[['Rotation', '0', null], ['Scale', '2', true]].map(([label, v, link]) => (
              <div key={label} className="h-[40px] flex items-center pl-[39px] relative shrink-0">
                <span className="w-[152px] text-[23.7px] text-[#b8b8b8]">{label}</span>
                {link && (
                  <svg width="26" height="20" viewBox="0 0 26 20" fill="none" stroke="#c4c4c4" strokeWidth="2" className="absolute left-[149px]">
                    <path d="M11 5H7a5 5 0 0 0 0 10h2M15 15h4a5 5 0 0 0 0-10h-2M3 1l20 18" />
                  </svg>
                )}
                <div className="flex gap-[11px]">
                  <TransformField axis="X" value={v} labelW={27} width={81} />
                  <TransformField axis="Y" value={v} labelW={27} width={81} />
                  <TransformField axis="Z" value={v} labelW={28} width={80} />
                </div>
              </div>
            ))}
          </div>
          <div className="h-[16px] shrink-0" />

          <SectionHead
            title="Canvas Renderer"
            icon={
              <svg width="34" height="22" viewBox="0 0 34 22" fill="none" stroke="#c4c4c4" strokeWidth="2.5"><ellipse cx="17" cy="11" rx="15" ry="9" /><circle cx="17" cy="11" r="4" /></svg>
            }
          />
          <div className="pt-[7px] pb-[15px]">
            <PropRow label="Cull Transparent Mes"><CheckBox /></PropRow>
          </div>

          <SectionHead title="Image" check icon={<ImgIcon />} />
          <div className="pt-[8px]">
            <PropRow label="Source Image"><ObjField icon={<ImgIcon stroke="#9a7ae8" size={21} />} label="UISprite" /></PropRow>
            <PropRow label="Color"><ColorField color="bg-[#ff9160]" /></PropRow>
            <PropRow label="Material"><ObjField label="None (Material)" /></PropRow>
            <PropRow label="Raycast Target"><CheckBox /></PropRow>
            <PropRow label="Raycast Padding" tri h="h-[40px]" />
            <div className="h-[4px]" />
            <PropRow label="Maskable"><CheckBox /></PropRow>
            <PropRow label="Image Type" pad="pl-[45px]" labelW="w-[243px]"><DropDown width={241}>Sliced</DropDown></PropRow>
            <PropRow label="Fill Center" pad="pl-[75px]" labelW="w-[211px]"><CheckBox /></PropRow>
            <PropRow label="Pixels Per Unit Mul" pad="pl-[75px]" labelW="w-[211px]"><Field width={244}>1</Field></PropRow>
            <div className="h-[15px]" />
          </div>

          <SectionHead title="Button" check icon={
            <svg width="26" height="22" viewBox="0 0 26 22" fill="#c4c4c4" stroke="#c4c4c4" strokeWidth="2"><ellipse cx="13" cy="11" rx="12" ry="10" fill="none" /><ellipse cx="13" cy="11" rx="9" ry="7" /></svg>
          } />
          <div className="pt-[8px]">
            <PropRow label="Interactable"><CheckBox /></PropRow>
            <PropRow label="Transition"><DropDown width={256}>Color Tint</DropDown></PropRow>
            <PropRow label="Target Graphic" pad="pl-[69px]" labelW="w-[211px]"><ObjField icon={<ImgIcon size={21} />} label="Button (Image)" /></PropRow>
            <PropRow label="Normal Color" pad="pl-[69px]" labelW="w-[211px]"><ColorField color="bg-white" /></PropRow>
          </div>
        </div>
        <div className="flex-1 flex flex-col items-center pt-[10px]">
          <Tri dir="up" size={12} />
          <div className="mt-[10px] ml-[6px] w-[14px] h-[709px] rounded-full bg-[#5f5f5f]" />
          <div className="mt-[466px]"><Tri size={12} /></div>
        </div>
      </div>
      <div className="flex-1 bg-[#3c3c3c] flex items-center border-t-2 border-[#2a2a2a]">
        <div className="ml-[10px] w-[114px] h-full flex items-center pl-[5px] gap-[5px] border-x-2 border-[#333333]">
          <span className="text-[23.7px] font-bold text-[#c4c4c4]">Button</span>
          <Tri size={13} />
        </div>
        <div className="ml-[6px] w-[405px] h-[8px] border-y-2 border-[#585858]" />
        <span className="ml-auto mr-[3px]"><Kebab /></span>
      </div>
    </div>
  );
}

export default function App() {
  return (
    <div className="w-[2398px] h-[1514px] flex flex-col bg-[#191919] overflow-hidden font-['Inter',sans-serif]">
      {/* title + menu */}
      <div className="h-[46px] bg-white flex items-center pl-[10px] shrink-0">
        <UnityMini width={26} bg="#4a4a4a" color="#ffffff" />
        <span className="ml-[10px] pt-[2px] text-[23.3px] text-[#7e7e7e] font-['Open_Sans'] tracking-[0.2px] whitespace-nowrap">mini_hw_02 - StartScene - Windows, Mac, Linux - Unity 2021.3.9f1 Personal &lt;DX11&gt;</span>
        <div className="ml-auto flex items-center gap-[70px] pr-[27px]">
          <svg width="20" height="20" viewBox="0 0 20 20" stroke="#6a6a6a" strokeWidth="1.5"><path d="M0 10h20" /></svg>
          <svg width="20" height="20" viewBox="0 0 20 20" stroke="#6a6a6a" strokeWidth="1.5" fill="none"><rect x="1" y="1" width="18" height="18" /></svg>
          <svg width="20" height="20" viewBox="0 0 20 20" stroke="#6a6a6a" strokeWidth="1.5"><path d="M1 1l18 18M19 1L1 19" /></svg>
        </div>
      </div>
      <div className="h-[45px] bg-white flex items-center pl-[3px] pt-[6px] gap-[14.5px] shrink-0 text-[23px] text-[#333333] font-['Open_Sans'] whitespace-nowrap">
        <span>File</span><span>Edit</span><span>Assets</span><span>GameObject</span><span>Component</span><span>Cinemachine</span><span>Puzzle Kit Tools</span><span>Tutorial</span><span>Window</span><span>Help</span>
      </div>
      <Toolbar />
      <div className="h-[1326px] flex shrink-0">
        <div className="w-[1014px] flex flex-col gap-[5px] shrink-0"><ScenePanel /><GamePanel /></div>
        <div className="ml-[3px] w-[817px] flex flex-col gap-[4px] shrink-0"><HierarchyPanel /><ProjectPanel /></div>
        <div className="ml-[4px] flex-1 flex flex-col min-w-0"><InspectorPanel /></div>
      </div>
      {/* status bar */}
      <div className="flex-1 flex items-start pt-[8px] justify-end gap-[22px] pr-[3px] overflow-hidden">
        <svg width="30" height="30" viewBox="0 0 30 30" fill="none" stroke="#c4c4c4" strokeWidth="2" className="shrink-0"><ellipse cx="15" cy="17" rx="8" ry="10" fill="#c4c4c4" /><path d="M3 3l24 24M7 9L2 6M23 9l5-3M5 17H1M25 17h4" /></svg>
        <svg width="30" height="30" viewBox="0 0 30 30" fill="#c4c4c4" className="shrink-0"><ellipse cx="15" cy="7" rx="12" ry="5" /><path d="M3 11c3 4 21 4 24 0v5c-3 4-21 4-24 0zM3 20c3 4 21 4 24 0v4c-3 4-21 4-24 0z" /></svg>
        <svg width="30" height="30" viewBox="0 0 30 30" fill="none" stroke="#c4c4c4" strokeWidth="2" className="shrink-0"><path d="M4 4l22 22M3 15c5-8 19-8 24 0-5 8-19 8-24 0z" /><circle cx="15" cy="15" r="4" /></svg>
        <svg width="30" height="30" viewBox="0 0 30 30" fill="none" stroke="#c4c4c4" strokeWidth="2" className="shrink-0"><circle cx="15" cy="15" r="13" /><path d="M9 15l4 4 8-8" /></svg>
      </div>
    </div>
  );
}
